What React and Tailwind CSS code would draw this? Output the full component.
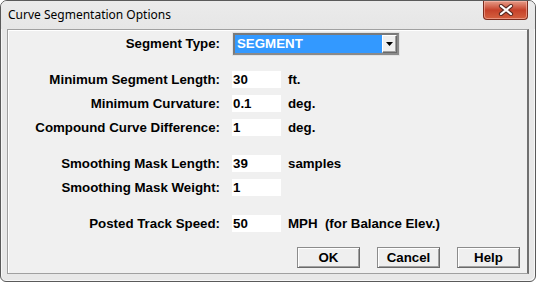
import React from "react";

const F = { fontFamily: '"Liberation Sans", Arial, sans-serif' };

function Row({ label, value, unit, mt }) {
  return (
    <div className={`flex items-center h-[17px] ${mt}`}>
      <div className="w-[212px] text-right font-bold text-[13.3px] leading-[17px] text-black whitespace-nowrap">{label}</div>
      <div className="ml-[12px] w-[49px] h-[17px] bg-white pl-[1px] font-bold text-[13.3px] leading-[17px] text-black">{value}</div>
      {unit && <div className="ml-[7px] font-bold text-[13.3px] leading-[17px] text-black whitespace-pre">{unit}</div>}
    </div>
  );
}

function Btn({ children }) {
  return (
    <div className="w-[63px] h-[21px] bg-[#efefef] border border-[#8c8c8c] border-r-[#6a6a6a] border-b-[#6a6a6a] shadow-[inset_1px_1px_0_#ffffff,inset_-1px_-1px_0_#a0a0a0] flex items-center justify-center font-bold text-[13.3px] text-black">
      {children}
    </div>
  );
}

export default function App() {
  return (
    <div className="w-[536px] h-[282px] bg-white" style={F}>
      <div className="w-[536px] h-[282px] rounded-t-[7px] rounded-b-[6px] border border-[#5a5a5a] bg-[#e8e8e8] shadow-[inset_1px_1px_0_#f7f7f7,inset_-1px_-1px_0_#f7f7f7] flex flex-col overflow-hidden">
        <div className="h-[28px] flex items-start justify-between bg-linear-to-b from-[#ebebeb] to-[#e6e6e6]">
          <div className="pl-[7px] pt-[6px] text-[12px] leading-[16px] text-black" style={{ fontFamily: '"Noto Sans", "Open Sans", sans-serif' }}>
            Curve Segmentation Options
          </div>
          <div className="mr-[7px] w-[45px] h-[19px] rounded-b-[4px] border border-t-0 border-[#7b2c1e] bg-linear-to-b from-[#e59b88] via-[#c6412a] to-[#d4603f] shadow-[inset_0_0_0_1px_rgba(255,200,190,0.5)] flex items-center justify-center">
            <svg width="16" height="12" viewBox="0 0 16 12">
              <path d="M3 2 L13 10 M13 2 L3 10" stroke="#5a2a22" strokeWidth="4.2" strokeLinecap="round" />
              <path d="M3 2 L13 10 M13 2 L3 10" stroke="#ffffff" strokeWidth="2.2" strokeLinecap="round" />
            </svg>
          </div>
        </div>
        <div className="mx-[6px] h-[245px] bg-[#f0f0f0] border-t border-l border-b border-[#a0a0a0] border-r-2 border-r-[#707070] shadow-[inset_1px_1px_0_#ffffff] flex flex-col">
          <div className="flex items-center h-[24px] mt-[2px]">
            <div className="w-[212px] text-right font-bold text-[13.3px] leading-[24px] text-black">Segment Type:</div>
            <div className="ml-[12px] w-[168px] h-[24px] border border-[#e3e3e3] flex">
              <div className="flex-1 border-2 border-[#8a8a8a] border-t-[#7a7a7a] border-l-[#7a7a7a] flex">
                <div className="flex-1 bg-[#3399ff] text-white font-bold text-[13.3px] leading-[18px] pl-[2px]">SEGMENT</div>
                <div className="w-[15px] h-[18px] bg-[#efefef] border-t border-l border-white border-b border-r border-b-[#696969] border-r-[#696969] shadow-[inset_-1px_-1px_0_#a0a0a0] flex items-center justify-center">
                  <svg width="7" height="4" viewBox="0 0 7 4"><path d="M0 0 H7 L3.5 4 Z" fill="#000" /></svg>
                </div>
              </div>
            </div>
          </div>
          <Row label="Minimum Segment Length:" value="30" unit="ft." mt="mt-[15px]" />
          <Row label="Minimum Curvature:" value="0.1" unit="deg." mt="mt-[7px]" />
          <Row label="Compound Curve Difference:" value="1" unit="deg." mt="mt-[7px]" />
          <Row label="Smoothing Mask Length:" value="39" unit="samples" mt="mt-[19px]" />
          <Row label="Smoothing Mask Weight:" value="1" mt="mt-[7px]" />
          <Row label="Posted Track Speed:" value="50" unit="MPH  (for Balance Elev.)" mt="mt-[19px]" />
          <div className="mt-[15px] flex justify-end gap-[17px] pr-[7px]">
            <Btn>OK</Btn>
            <Btn>Cancel</Btn>
            <Btn>Help</Btn>
          </div>
        </div>
      </div>
    </div>
  );
}
